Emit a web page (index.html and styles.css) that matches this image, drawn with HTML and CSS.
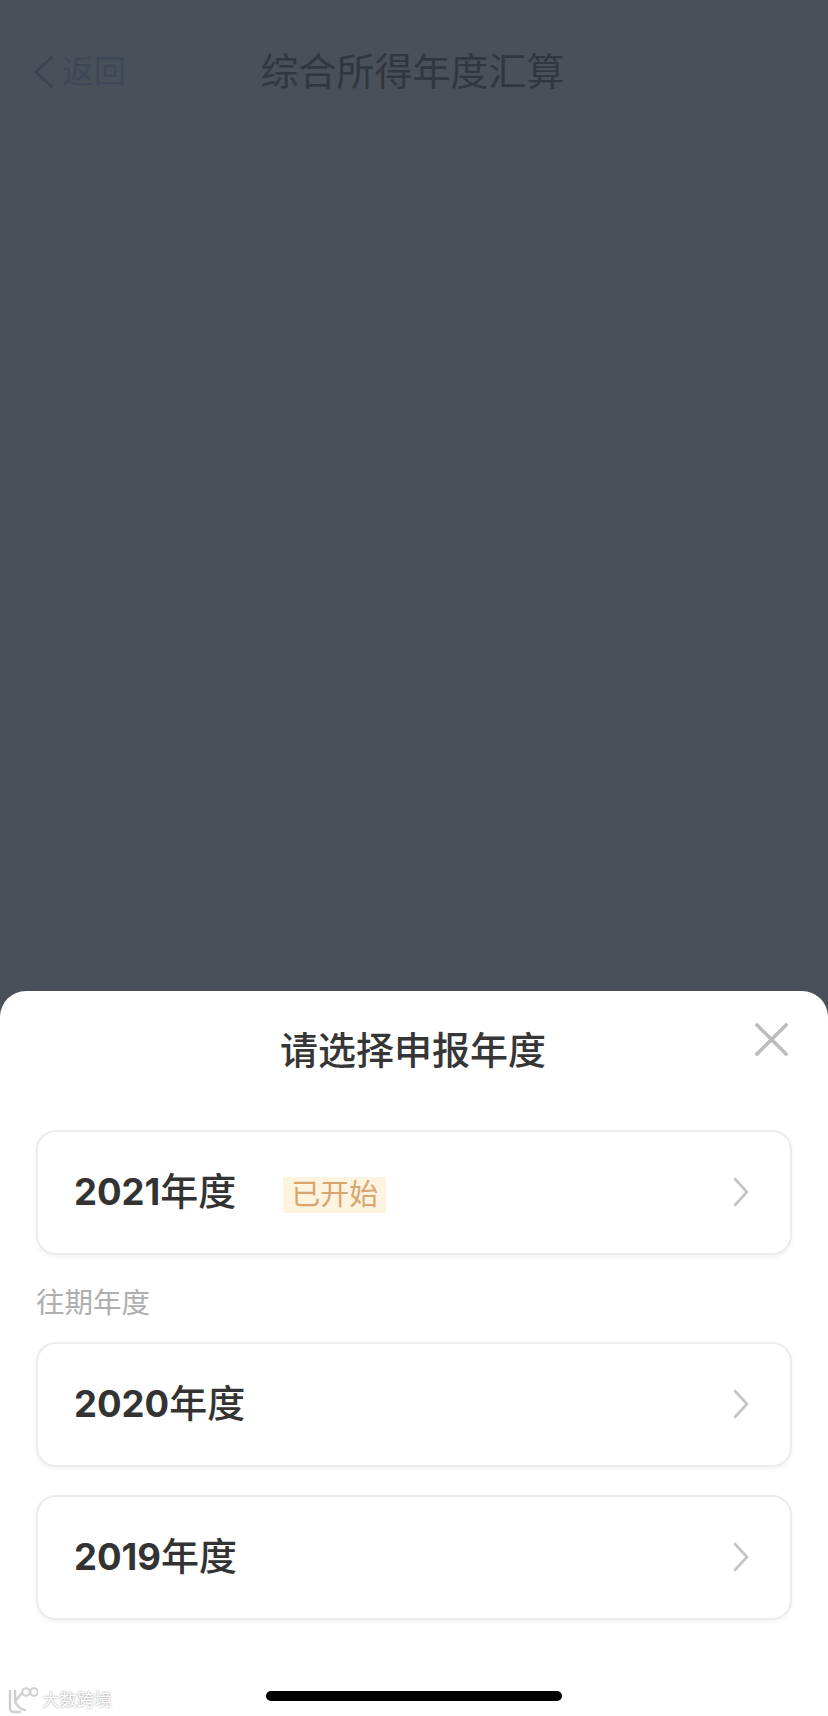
FILE: index.html
```html
<!DOCTYPE html>
<html lang="zh-CN">
<head>
  <meta charset="UTF-8">
  <meta name="viewport" content="width=device-width, initial-scale=1.0">
  <title>综合所得年度汇算</title>
  <link rel="stylesheet" href="styles.css">
</head>
<body>
  <div class="page">
    <!-- Dimmed page behind the sheet -->
    <div class="scrim">
      <header class="nav">
        <div class="nav-back">
          <svg class="nav-back-icon" width="20" height="34" viewBox="0 0 20 34">
            <path d="M18.5 1.5 L2 17 L18.5 32.5" fill="none" stroke="#3c4354" stroke-width="2.6"/>
          </svg>
          <span>返回</span>
        </div>
        <div class="nav-title">综合所得年度汇算</div>
      </header>
    </div>

    <!-- Year picker sheet -->
    <section class="sheet">
      <h2 class="sheet-title">请选择申报年度</h2>
      <svg class="sheet-close" width="33" height="33" viewBox="0 0 34 34">
        <path d="M2 2 L32 32 M32 2 L2 32" fill="none" stroke="#bcbcbc" stroke-width="3.8" stroke-linecap="round"/>
      </svg>

      <div class="year-card">
        <span class="year-name">2021<span class="year-unit">年度</span></span>
        <span class="year-tag">已开始</span>
        <svg class="year-arrow" width="16" height="30" viewBox="0 0 16 30">
          <path d="M2 2 L14 15 L2 28" fill="none" stroke="#c4c4c4" stroke-width="2.6" stroke-linecap="round"/>
        </svg>
      </div>

      <div class="past-label">往期年度</div>

      <div class="year-list">
        <div class="year-card">
          <span class="year-name">2020<span class="year-unit">年度</span></span>
          <svg class="year-arrow" width="16" height="30" viewBox="0 0 16 30">
            <path d="M2 2 L14 15 L2 28" fill="none" stroke="#c4c4c4" stroke-width="2.6" stroke-linecap="round"/>
          </svg>
        </div>
        <div class="year-card">
          <span class="year-name">2019<span class="year-unit">年度</span></span>
          <svg class="year-arrow" width="16" height="30" viewBox="0 0 16 30">
            <path d="M2 2 L14 15 L2 28" fill="none" stroke="#c4c4c4" stroke-width="2.6" stroke-linecap="round"/>
          </svg>
        </div>
      </div>

      <div class="home-bar"></div>
    </section>

    <!-- Watermark in the corner -->
    <div class="watermark">
      <svg width="31" height="28" viewBox="0 0 31 28">
        <path d="M3 5 L3 22 Q3 26 7 26 L13 26 M8 5 L8 15 L15 7 M8 15 Q11 23 18 24" fill="none" stroke="#cfcfcf" stroke-width="2.4" stroke-linecap="round"/>
        <circle cx="19" cy="6" r="3.8" fill="none" stroke="#cfcfcf" stroke-width="2"/>
        <circle cx="27" cy="6" r="3.8" fill="none" stroke="#cfcfcf" stroke-width="2"/>
      </svg>
      <span>大数跨境</span>
    </div>
  </div>
</body>
</html>
```

FILE: styles.css
```css
/* General layout */
body {
  margin: 0;
  font-family: "Liberation Sans", "Noto Sans CJK SC", sans-serif;
  background-color: #495059;
}

.page {
  position: relative;
  display: flex;
  flex-direction: column;
  width: 828px;
  height: 1716px;
  overflow: hidden;
}

/* Dimmed page */
.scrim {
  flex: 1;
  background-color: #495059;
}

.nav {
  display: grid;
  grid-template-columns: 1fr auto 1fr;
  align-items: center;
  padding: 50px 37px 0 34px;
  height: 44px;
}

.nav-back {
  display: flex;
  align-items: center;
  gap: 8px;
  font-size: 32px;
  line-height: 44px;
  color: #3f4657;
}

.nav-title {
  font-size: 38px;
  line-height: 44px;
  color: #32363e;
}

/* Sheet */
.sheet {
  position: relative;
  padding: 39px 36px 15px;
  background-color: #fff;
  border-radius: 26px 26px 0 0;
}

.sheet-title {
  margin: 0 0 58px;
  font-size: 38px;
  line-height: 42px;
  font-weight: 500;
  text-align: center;
  color: #363636;
  transform: translateX(-1px);
}

.sheet-close {
  position: absolute;
  top: 32px;
  right: 40px;
}

/* Year rows */
.year-card {
  display: flex;
  align-items: center;
  box-sizing: border-box;
  height: 125px;
  padding: 0 36px;
  background-color: #fff;
  border: 2px solid #ececf0;
  border-radius: 20px;
  box-shadow: 0 2px 4px rgba(0, 0, 0, 0.05);
}

.year-name {
  margin-top: -2px;
  font-family: Inter, "Noto Sans CJK SC", sans-serif;
  font-size: 36.5px;
  line-height: 44px;
  font-weight: 700;
  color: #333;
}

.year-unit {
  font-size: 38px;
  font-weight: 500;
}

.year-tag {
  margin: 4px 0 0 47px;
  padding: 0 8px;
  font-size: 29px;
  line-height: 36px;
  color: #d9a56f;
  background-color: #fdf4e0;
}

.year-arrow {
  margin: -2px 5px 0 auto;
}

.past-label {
  margin: 33px 0 24px;
  font-size: 28.5px;
  line-height: 30px;
  color: #aeaeae;
}

.year-list {
  display: flex;
  flex-direction: column;
  gap: 28px;
}

.home-bar {
  width: 296px;
  height: 10px;
  margin: 71px auto 0;
  background-color: #000;
  border-radius: 5px;
}

/* Watermark */
.watermark {
  position: absolute;
  left: 7px;
  bottom: 2px;
  display: flex;
  align-items: center;
  gap: 4px;
  font-size: 17.5px;
  line-height: 24px;
  color: #fff;
  text-shadow: 0 0 2px #888;
}
```
